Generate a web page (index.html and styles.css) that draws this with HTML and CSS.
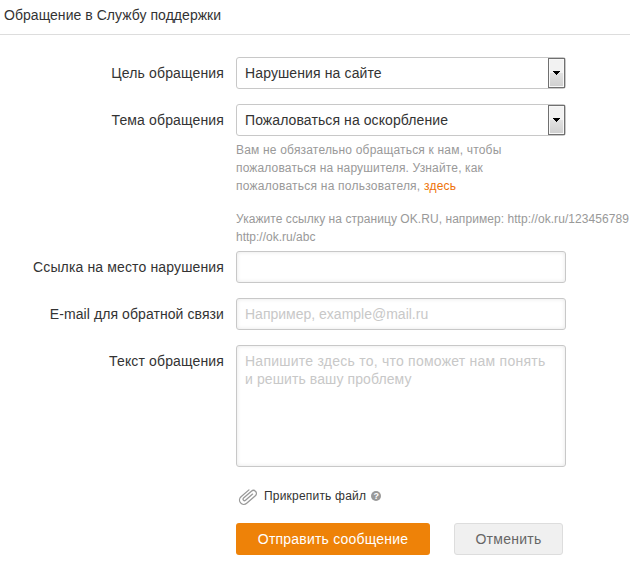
FILE: index.html
```html
<!DOCTYPE html>
<html lang="ru">
<head>
<meta charset="utf-8">
<title>Обращение в Службу поддержки</title>
<link rel="stylesheet" href="styles.css">
</head>
<body>
<h1 class="title">Обращение в Службу поддержки</h1>
<form class="form">
  <div class="row">
    <label class="label">Цель обращения</label>
    <div class="select"><span class="value v-goal">Нарушения на сайте</span><span class="drop"><svg width="7" height="4" viewBox="0 0 7 4" shape-rendering="crispEdges"><path d="M0 0h7v1H6v1H5v1H4v1H3V3H2V2H1V1H0z"/></svg></span></div>
  </div>
  <div class="row">
    <label class="label">Тема обращения</label>
    <div class="field">
      <div class="select"><span class="value v-topic">Пожаловаться на оскорбление</span><span class="drop"><svg width="7" height="4" viewBox="0 0 7 4" shape-rendering="crispEdges"><path d="M0 0h7v1H6v1H5v1H4v1H3V3H2V2H1V1H0z"/></svg></span></div>
      <p class="hint"><span class="hint-a">Вам не обязательно обращаться к нам, чтобы</span><br><span class="hint-b">пожаловаться на нарушителя. Узнайте, как</span><br><span class="hint-c">пожаловаться на пользователя, <a class="link">здесь</a></span></p>
      <p class="hint hint-url"><span class="hint-d">Укажите ссылку на страницу OK.RU, например: http://ok.ru/123456789</span><br>http://ok.ru/abc</p>
    </div>
  </div>
  <div class="row row-link">
    <label class="label">Ссылка на место нарушения</label>
    <div class="input"></div>
  </div>
  <div class="row">
    <label class="label l-mail">E-mail для обратной связи</label>
    <div class="input">Например, example@mail.ru</div>
  </div>
  <div class="row">
    <label class="label">Текст обращения</label>
    <div class="input area"><span class="p-one">Напишите здесь то, что поможет нам понять</span><br><span class="p-two">и решить вашу проблему</span></div>
  </div>
  <div class="attach">
    <svg class="clip" width="20" height="18" viewBox="0 0 20 18" fill="none" stroke="#999" stroke-width="1.3" stroke-linecap="round" stroke-linejoin="round"><path transform="translate(10 9.4) rotate(-41)" d="M5 1.3H-4.4a1.5 1.5 0 0 1 0-3H6a3 3 0 0 1 0 6H-5.5a4.3 4.3 0 0 1 0-8.6H5"/></svg>
    <span class="attach-text">Прикрепить файл</span>
    <span class="help">?</span>
  </div>
  <div class="actions">
    <div class="btn primary">Отправить сообщение</div>
    <div class="btn cancel">Отменить</div>
  </div>
</form>
</body>
</html>
```
FILE: styles.css
```css
* { box-sizing: border-box; }
body { margin: 0; background: #fff; color: #333; font: 14px/18px "Liberation Sans", Arial, sans-serif; overflow: hidden; height: 568px; }
.title { margin: 0; height: 35px; padding: 6px 4px 0; border-bottom: 1px solid #ddd; font-size: 14px; font-weight: normal; letter-spacing: .04px; white-space: nowrap; }
.form { padding-top: 22px; }
.row { display: flex; margin-bottom: 15px; }
.label { width: 224px; margin-right: 12px; padding-top: 7px; text-align: right; white-space: nowrap; letter-spacing: .14px; flex: none; }
.l-mail { letter-spacing: .08px; }
.field { width: 394px; flex: none; }
.select, .input { width: 330px; height: 32px; border: 1px solid #c8c8c8; border-radius: 3px; flex: none; white-space: nowrap; }
.select { display: flex; justify-content: space-between; padding-left: 8px; }
.value { padding-top: 6px; }
.v-goal { letter-spacing: .12px; }
.v-topic { letter-spacing: .09px; }
.drop { width: 17px; height: 30px; border: 1px solid #707070; background: linear-gradient(#f2f2f2 0 49%, #e2e2e2 50%, #cfcfcf); box-shadow: inset 0 0 0 1px #f8f8f8; display: flex; align-items: center; justify-content: center; }
.hint { margin: 5px 0 0; font-size: 12px; color: #999; white-space: nowrap; }
.hint-a { letter-spacing: .19px; }
.hint-b { letter-spacing: .15px; }
.hint-c { letter-spacing: .23px; }
.hint-d { letter-spacing: .06px; }
.hint-url { margin-top: 15px; }
.link { color: #ee7208; }
.row-link { margin-top: -10px; }
.input { padding: 6px 8px; color: #c8c8c8; box-shadow: inset 0 0 4px rgba(0,0,0,.1); }
.area { height: 122px; }
.p-one { letter-spacing: .24px; }
.p-two { letter-spacing: .1px; }
.attach { display: flex; align-items: center; height: 26px; margin: 16px 0 0 238px; font-size: 12px; }
.clip { overflow: visible; }
.attach-text { margin-left: 6px; letter-spacing: .2px; }
.help { width: 10px; height: 10px; margin-left: 5px; border-radius: 50%; background: #999; color: #fff; font: bold 9px/10px "Liberation Sans", Arial, sans-serif; text-align: center; }
.actions { display: flex; gap: 24px; margin: 14px 0 0 236px; }
.btn { height: 32px; border-radius: 3px; line-height: 32px; text-align: center; white-space: nowrap; }
.primary { width: 194px; background: #ee8208; color: #fff; letter-spacing: .2px; }
.cancel { width: 109px; border: 1px solid #ddd; background: #f0f0f0; color: #666; line-height: 30px; letter-spacing: .28px; }
```
